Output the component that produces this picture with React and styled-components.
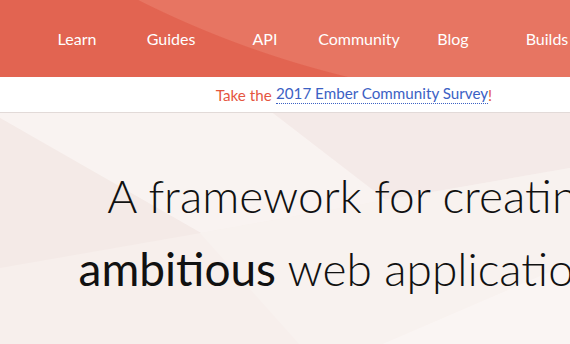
import React from "react";
import styled, { createGlobalStyle } from "styled-components";

const Global = createGlobalStyle`
  html, body { margin: 0; padding: 0; overflow: hidden; background: #f7efec; }
  body { font-family: "Lato", "Open Sans", sans-serif; }
`;

const Page = styled.div`
  width: 708px;
`;

const Header = styled.header`
  height: 77px;
  display: flex;
  align-items: center;
  padding-left: 30px;
  box-sizing: border-box;
  background: radial-gradient(circle 982px at 579px -877px, #e77562 981px, #e26451 982px);
`;

const NavItem = styled.a`
  width: 94px;
  text-align: center;
  color: #fff;
  font-size: 16px;
  text-decoration: none;
`;

const Banner = styled.div`
  height: 35px;
  background: #fff;
  border-bottom: 1px solid #e2dad8;
  display: flex;
  align-items: center;
  justify-content: center;
  font-size: 15.2px;
  color: #e5563f;
  box-shadow: 0 1px 1px rgba(0, 0, 0, 0.04);
`;

const SurveyLink = styled.a`
  color: #3b61c4;
  text-decoration: none;
  border-bottom: 1px dotted #3b61c4;
  margin-left: 0.28em;
  line-height: 1.15;
`;

const Hero = styled.section`
  height: 232px;
  display: flex;
  justify-content: center;
  padding-top: 46px;
  box-sizing: border-box;
  background-color: #f7efec;
  background-image: url("data:image/svg+xml,${encodeURIComponent(
    `<svg xmlns='http://www.w3.org/2000/svg' width='570' height='232'><polygon points='0,0 273,0 386,87 201,120 0,5' fill='#f9f3f1'/><polygon points='0,5 201,120 0,155' fill='#f4eae7'/><polygon points='273,0 570,0 570,55 386,87' fill='#f4eae8'/><polygon points='200,120 386,87 570,55 570,150 380,232 300,232' fill='#f8f2ef'/><polygon points='380,232 570,150 570,232' fill='#faf5f3'/></svg>`
  )}");
  background-repeat: no-repeat;
`;

const Title = styled.h1`
  margin: 0;
  font-weight: 300;
  font-size: 46px;
  line-height: 73px;
  text-align: center;
  color: #111;
  white-space: nowrap;
`;

const Strong = styled.span`
  font-weight: 400;
`;

const items = ["Learn", "Guides", "API", "Community", "Blog", "Builds"];

export default function App() {
  return (
    <Page>
      <Global />
      <Header>
        {items.map((t) => (
          <NavItem key={t} href="#">
            {t}
          </NavItem>
        ))}
      </Header>
      <Banner>
        Take the<SurveyLink href="#">2017 Ember Community Survey</SurveyLink>!
      </Banner>
      <Hero>
        <Title>
          A framework for creating
          <br />
          <Strong>ambitious</Strong> web applications.
        </Title>
      </Hero>
    </Page>
  );
}
